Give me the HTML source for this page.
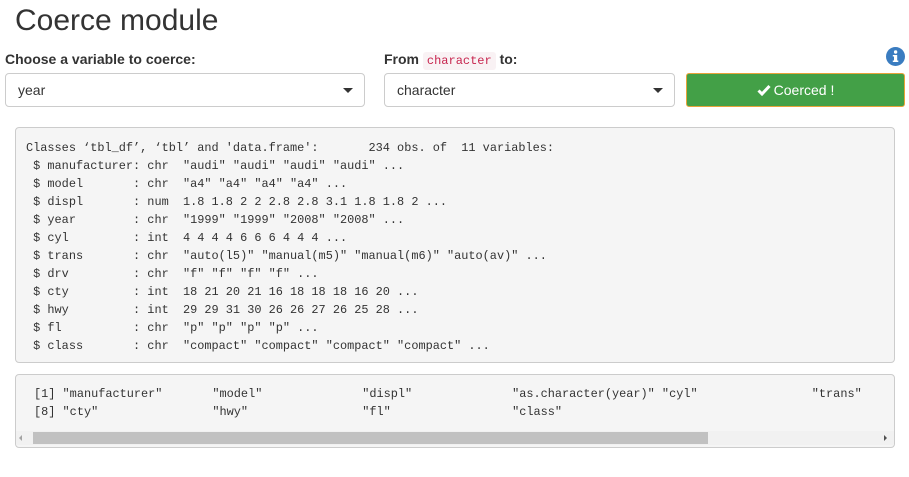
<!DOCTYPE html>
<html><head><meta charset="utf-8"><style>
body{margin:0;width:909px;height:477px;background:#fff;font-family:"Liberation Sans",sans-serif;color:#333;position:relative;overflow:hidden}
.abs{position:absolute}
h1{position:absolute;left:15px;top:3px;margin:0;font-size:30px;font-weight:400;line-height:36px}
.lbl{font-size:14px;font-weight:bold;top:49px;line-height:20px}
code{font-family:"Liberation Mono",monospace;font-size:12px;color:#c7254e;background:#f9f2f4;padding:2px 4px;border-radius:3px;font-weight:normal}
.sel{top:73px;height:32px;border:1px solid #ccc;border-radius:4px;background:#fff;font-size:14px;line-height:32px;box-sizing:content-box}
.sel span{position:absolute;left:12px}
.caret{position:absolute;right:11px;top:14px;width:0;height:0;border-left:5px solid transparent;border-right:5px solid transparent;border-top:5px solid #333}
.btn{left:686px;top:73px;width:217px;height:32px;background:#43a047;border:1px solid #e8a33a;border-radius:3px;color:#fff;font-size:14px;text-align:center;line-height:32px}
pre{position:absolute;margin:0;font-family:"Liberation Mono",monospace;font-size:11.9px;line-height:18px;color:#333;background:#f5f5f5;border:1px solid #ccc;border-radius:4px;box-sizing:border-box;white-space:pre;overflow:hidden}
</style></head><body>
<h1>Coerce module</h1>
<div class="abs lbl" style="left:5px">Choose a variable to coerce:</div>
<div class="abs lbl" style="left:384px">From <code>character</code> to:</div>
<svg class="abs" style="left:886px;top:47px" width="19" height="19" viewBox="0 0 19 19"><circle cx="9.5" cy="9.5" r="9.5" fill="#3a7cc0"/><rect x="8" y="8" width="3.2" height="7" fill="#fff"/><rect x="6.8" y="8" width="3" height="1.5" fill="#fff"/><rect x="6.8" y="13.5" width="5.5" height="1.5" fill="#fff"/><circle cx="9.6" cy="5" r="1.7" fill="#fff"/></svg>
<div class="abs sel" style="left:5px;width:358px"><span>year</span><div class="caret"></div></div>
<div class="abs sel" style="left:384px;width:289px"><span>character</span><div class="caret"></div></div>
<div class="abs btn"><svg width="14" height="12" viewBox="0 0 14 12" style="vertical-align:-1px;margin-right:3px"><path d="M1.5 6.5 L5 10 L12.5 2" stroke="#fff" stroke-width="3" fill="none"/></svg>Coerced !</div>
<pre style="left:15px;top:127px;width:880px;height:236px;padding:11px 10px">Classes ‘tbl_df’, ‘tbl’ and 'data.frame':	234 obs. of  11 variables:
 $ manufacturer: chr  "audi" "audi" "audi" "audi" ...
 $ model       : chr  "a4" "a4" "a4" "a4" ...
 $ displ       : num  1.8 1.8 2 2 2.8 2.8 3.1 1.8 1.8 2 ...
 $ year        : chr  "1999" "1999" "2008" "2008" ...
 $ cyl         : int  4 4 4 4 6 6 6 4 4 4 ...
 $ trans       : chr  "auto(l5)" "manual(m5)" "manual(m6)" "auto(av)" ...
 $ drv         : chr  "f" "f" "f" "f" ...
 $ cty         : int  18 21 20 21 16 18 18 18 16 20 ...
 $ hwy         : int  29 29 31 30 26 26 27 26 25 28 ...
 $ fl          : chr  "p" "p" "p" "p" ...
 $ class       : chr  "compact" "compact" "compact" "compact" ...</pre>
<pre style="left:15px;top:374px;width:880px;height:74px;padding:10px 18px">[1] "manufacturer"       "model"              "displ"              "as.character(year)" "cyl"                "trans"
[8] "cty"                "hwy"                "fl"                 "class"</pre>
<div class="abs" style="left:16px;top:431px;width:878px;height:14px;background:#f1f1f1"></div>
<div class="abs" style="left:33px;top:432px;width:675px;height:12px;background:#c1c1c1"></div>
<div class="abs" style="left:19px;top:435px;width:0;height:0;border-top:3px solid transparent;border-bottom:3px solid transparent;border-right:3px solid #a3a3a3"></div>
<div class="abs" style="left:884px;top:435px;width:0;height:0;border-top:3px solid transparent;border-bottom:3px solid transparent;border-left:3px solid #505050"></div>
</body></html>
